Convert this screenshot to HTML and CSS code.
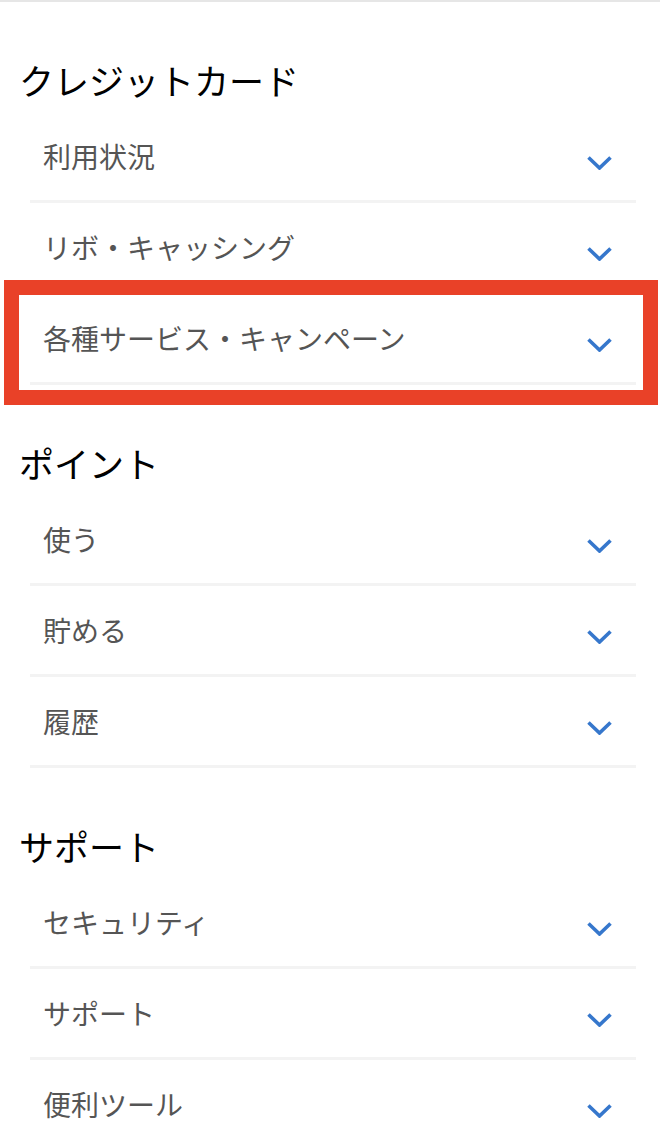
FILE: index.html
```html
<!DOCTYPE html>
<html lang="ja">
<head>
<meta charset="utf-8">
<title>メニュー</title>
<link rel="stylesheet" href="styles.css">
</head>
<body>
<div class="page">
  <section class="section">
    <h2 class="heading">クレジットカード</h2>
    <ul class="list">
      <li class="item"><span class="label">利用状況</span><svg class="chev" viewBox="0 0 25 14"><path d="M1.5 1.5 L12.5 12 L23.5 1.5"/></svg></li>
      <li class="item"><span class="label">リボ・キャッシング</span><svg class="chev" viewBox="0 0 25 14"><path d="M1.5 1.5 L12.5 12 L23.5 1.5"/></svg></li>
      <li class="item"><span class="label">各種サービス・キャンペーン</span><svg class="chev" viewBox="0 0 25 14"><path d="M1.5 1.5 L12.5 12 L23.5 1.5"/></svg></li>
    </ul>
  </section>
  <section class="section">
    <h2 class="heading">ポイント</h2>
    <ul class="list">
      <li class="item"><span class="label">使う</span><svg class="chev" viewBox="0 0 25 14"><path d="M1.5 1.5 L12.5 12 L23.5 1.5"/></svg></li>
      <li class="item"><span class="label">貯める</span><svg class="chev" viewBox="0 0 25 14"><path d="M1.5 1.5 L12.5 12 L23.5 1.5"/></svg></li>
      <li class="item"><span class="label">履歴</span><svg class="chev" viewBox="0 0 25 14"><path d="M1.5 1.5 L12.5 12 L23.5 1.5"/></svg></li>
    </ul>
  </section>
  <section class="section">
    <h2 class="heading">サポート</h2>
    <ul class="list">
      <li class="item"><span class="label">セキュリティ</span><svg class="chev" viewBox="0 0 25 14"><path d="M1.5 1.5 L12.5 12 L23.5 1.5"/></svg></li>
      <li class="item"><span class="label">サポート</span><svg class="chev" viewBox="0 0 25 14"><path d="M1.5 1.5 L12.5 12 L23.5 1.5"/></svg></li>
      <li class="item"><span class="label">便利ツール</span><svg class="chev" viewBox="0 0 25 14"><path d="M1.5 1.5 L12.5 12 L23.5 1.5"/></svg></li>
    </ul>
  </section>
  <div class="highlight"></div>
</div>
</body>
</html>
```

FILE: styles.css
```css
html, body {
  margin: 0;
  padding: 0;
  background: #ffffff;
}
body {
  font-family: "Noto Sans CJK JP", "Noto Sans", sans-serif;
}
.page {
  position: relative;
  border-top: 2px solid #e6e6e6;
  height: 1124px;
  overflow: hidden;
}
.section {
  padding-top: 54px;
}
.heading {
  margin: 0 0 8px 0;
  padding-left: 19px;
  font-size: 35px;
  line-height: 48px;
  font-weight: 400;
  color: #000000;
}
.list {
  list-style: none;
  margin: 0 24px 0 30px;
  padding: 0;
}
.item {
  display: flex;
  align-items: center;
  justify-content: space-between;
  height: 88px;
  padding: 0 24px 0 13px;
  border-bottom: 3px solid #f3f3f3;
}
.label {
  font-size: 28px;
  line-height: 40px;
  color: #555555;
}
.chev {
  width: 25px;
  height: 14px;
  margin-top: 14px;
  fill: none;
  stroke: #3677cc;
  stroke-width: 3.6;
}
.highlight {
  position: absolute;
  left: 4px;
  top: 278px;
  width: 624px;
  height: 95px;
  border: 15px solid #e94128;
}
```
